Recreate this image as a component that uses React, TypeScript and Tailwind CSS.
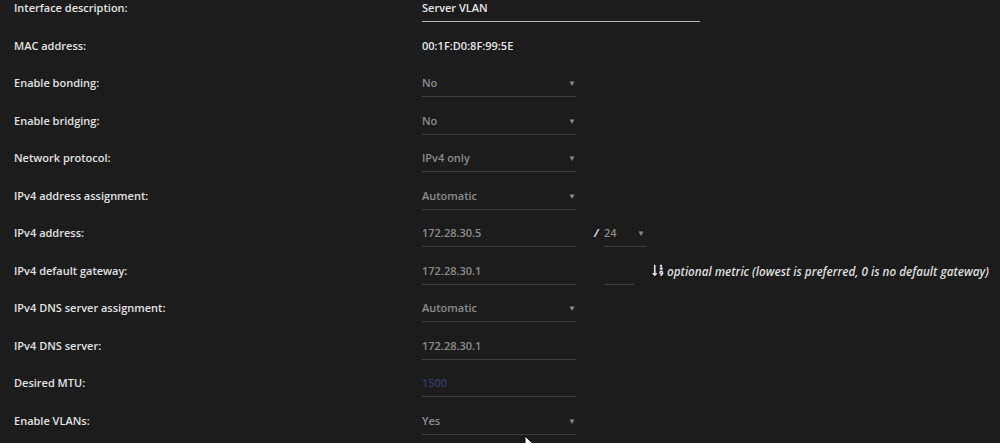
import { FaSortNumericDown } from "react-icons/fa";

type Row = {
  label: string;
  kind: "text" | "static" | "select" | "input" | "placeholder";
  value: string;
  extra?: "prefix" | "metric";
};

const rows: Row[] = [
  { label: "Interface description:", kind: "text", value: "Server VLAN" },
  { label: "MAC address:", kind: "static", value: "00:1F:D0:8F:99:5E" },
  { label: "Enable bonding:", kind: "select", value: "No" },
  { label: "Enable bridging:", kind: "select", value: "No" },
  { label: "Network protocol:", kind: "select", value: "IPv4 only" },
  { label: "IPv4 address assignment:", kind: "select", value: "Automatic" },
  { label: "IPv4 address:", kind: "input", value: "172.28.30.5", extra: "prefix" },
  { label: "IPv4 default gateway:", kind: "input", value: "172.28.30.1", extra: "metric" },
  { label: "IPv4 DNS server assignment:", kind: "select", value: "Automatic" },
  { label: "IPv4 DNS server:", kind: "input", value: "172.28.30.1" },
  { label: "Desired MTU:", kind: "placeholder", value: "1500" },
  { label: "Enable VLANs:", kind: "select", value: "Yes" },
];

function Caret() {
  return <span className="text-[8px] leading-4 text-[#8a8a8a]">▼</span>;
}

function Field({ row }: { row: Row }) {
  if (row.kind === "static") {
    return <div className="mt-[11px] leading-4 text-[#e6e6e6]">{row.value}</div>;
  }
  if (row.kind === "text") {
    return (
      <div className="mt-[11px] w-[278px] border-b border-[#b5b5b5] pb-[5px] leading-4 text-[#e6e6e6]">
        {row.value}
      </div>
    );
  }
  const color =
    row.kind === "placeholder" ? "text-[#3b3868]" : "text-[#8c8c8c]";
  return (
    <div className="mt-[11px] flex w-[154px] items-center justify-between border-b border-[#3e3e3e] pb-[5px] leading-4">
      <span className={color}>{row.value}</span>
      {row.kind === "select" && <Caret />}
    </div>
  );
}

function Extra({ kind }: { kind: "prefix" | "metric" }) {
  if (kind === "prefix") {
    return (
      <div className="ml-[18px] mt-[11px] flex items-start">
        <span className="w-[10px] italic font-bold leading-4 text-[#d8d8d8]">/</span>
        <div className="flex w-[43px] items-center justify-between border-b border-[#3e3e3e] pb-[5px] pr-[2px] leading-4">
          <span className="text-[#8c8c8c]">24</span>
          <Caret />
        </div>
      </div>
    );
  }
  return (
    <div className="ml-[29px] mt-[11px] flex items-start">
      <div className="h-[22px] w-[29px] border-b border-[#3e3e3e]" />
      <div className="ml-[18px] flex items-center gap-[3px] leading-4 text-[#dedede]">
        <FaSortNumericDown className="h-[13px] w-[12px]" />
        <span className="text-[11.7px] italic">optional metric (lowest is preferred, 0 is no default gateway)</span>
      </div>
    </div>
  );
}

export default function App() {
  return (
    <div className="relative h-[443px] w-[1000px] overflow-hidden bg-[#1c1c1c] font-['Open_Sans',sans-serif] text-[11px] font-semibold">
      <div className="-mt-[11px]">
        {rows.map((row) => (
          <div key={row.label} className="flex h-[37.5px] items-start">
            <div className="mt-[11px] w-[422px] shrink-0 pl-[14px] leading-4 text-[#e2e2e2]">{row.label}</div>
            <Field row={row} />
            {row.extra && <Extra kind={row.extra} />}
          </div>
        ))}
      </div>
      <svg
        className="absolute left-[524px] top-[435px]"
        width="12"
        height="18"
        viewBox="0 0 12 18"
      >
        <path d="M1 1 L1 15 L4.5 11.5 L7 17 L9 16 L6.5 10.5 L11 10.5 Z" fill="#fff" stroke="#000" strokeWidth="1" />
      </svg>
    </div>
  );
}
